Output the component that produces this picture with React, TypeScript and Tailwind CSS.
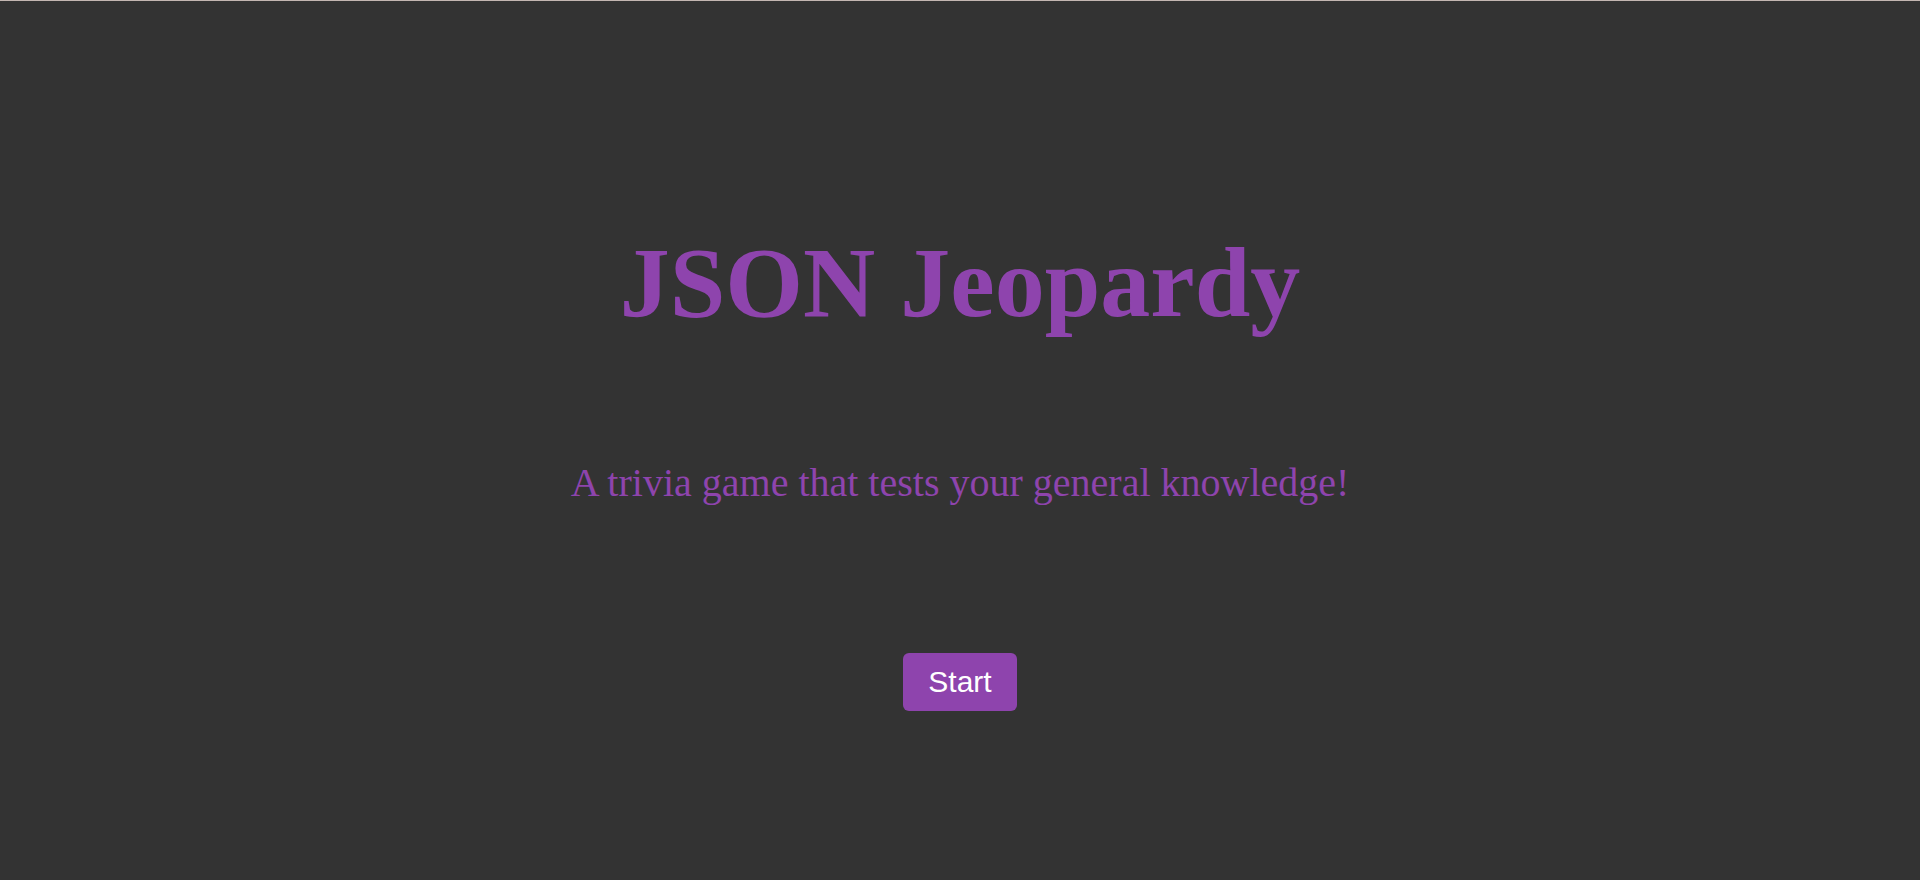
export default function App() {
  return (
    <div className="w-full h-[880px] bg-[#333333] border-t border-[#c4b7b2] flex flex-col items-center overflow-hidden">
      <h1 className="mt-[226px] text-[100px] font-bold text-[#8e44ad] leading-[111px] font-['Liberation_Serif','Times_New_Roman',serif]">
        JSON Jeopardy
      </h1>
      <p className="mt-[123px] text-[40px] text-[#8e44ad] leading-[44px] font-['Liberation_Serif','Times_New_Roman',serif]">
        A trivia game that tests your general knowledge!
      </p>
      <button className="mt-[148px] bg-[#8e44ad] text-white text-[30px] leading-[34px] px-[25px] py-[12px] rounded-[6px] font-['Liberation_Sans',Arial,sans-serif]">
        Start
      </button>
    </div>
  );
}
